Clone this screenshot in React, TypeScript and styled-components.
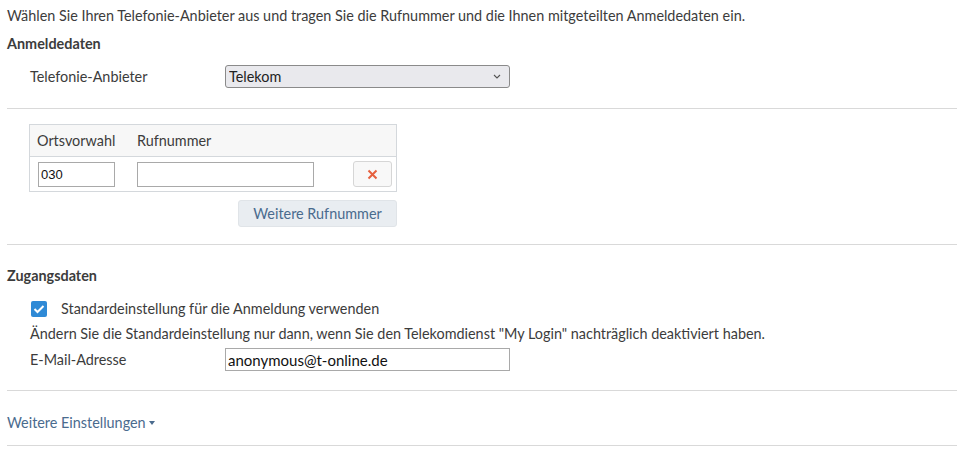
import { createGlobalStyle } from 'styled-components';
import styled from 'styled-components';

const GlobalStyle = createGlobalStyle`
  html, body {
    margin: 0;
    padding: 0;
    background: #fff;
  }
  body {
    font-family: Lato, "Open Sans", sans-serif;
    font-size: 14.4px;
    color: #3c3c3c;
  }
`;

const Page = styled.div`
  padding: 6px 0 0 7px;
`;

const Intro = styled.p`
  margin: 0 0 8px;
  line-height: 20px;
`;

const SectionTitle = styled.h3`
  margin: 0;
  font-size: 14.4px;
  font-weight: bold;
  line-height: 20px;
`;

const FieldRow = styled.div<{ $top?: number }>`
  display: flex;
  align-items: center;
  padding-left: 23px;
  margin-top: ${(p) => p.$top ?? 0}px;
`;

const Label = styled.label`
  width: 195px;
  line-height: 20px;
`;

const chevron =
  "url(\"data:image/svg+xml,%3Csvg xmlns='http://www.w3.org/2000/svg' width='8' height='5' viewBox='0 0 8 5'%3E%3Cpath d='M1 1l3 3 3-3' fill='none' stroke='%23555' stroke-width='1.1'/%3E%3C/svg%3E\")";

const Select = styled.select`
  appearance: none;
  width: 285px;
  height: 23px;
  padding: 0 3px;
  border: 1px solid #8a8a8a;
  border-radius: 3px;
  background: #e9e9ed ${chevron} no-repeat right 8px center;
  color: #222;
  font-family: inherit;
  font-size: 14.4px;
`;

const Divider = styled.hr<{ $top: number; $bottom: number }>`
  border: 0;
  border-top: 1px solid #d9d9d9;
  margin: ${(p) => p.$top}px 0 ${(p) => p.$bottom}px;
`;

const NumberTable = styled.div`
  margin-left: 22px;
  width: 366px;
  border: 1px solid #d4d8dc;
`;

const HeadRow = styled.div`
  display: flex;
  align-items: center;
  height: 31px;
  background: #f7f7f7;
  border-bottom: 1px solid #d4d8dc;
  padding-left: 7px;
`;

const HeadCell = styled.span<{ $w: number }>`
  width: ${(p) => p.$w}px;
`;

const BodyRow = styled.div`
  display: flex;
  align-items: center;
  height: 34px;
  padding-left: 8px;
`;

const TextInput = styled.input<{ $w: number; $big?: boolean; $gap?: number }>`
  box-sizing: border-box;
  width: ${(p) => p.$w}px;
  height: ${(p) => (p.$big ? 23 : 25)}px;
  margin-left: ${(p) => p.$gap ?? 0}px;
  border: 1px solid #a9a9a9;
  padding: 0 2px;
  color: #111;
  font-family: ${(p) => (p.$big ? 'inherit' : '"Liberation Sans", Arial, sans-serif')};
  font-size: ${(p) => (p.$big ? 15 : 13)}px;
  outline: none;
`;

const DeleteButton = styled.button`
  box-sizing: border-box;
  width: 39px;
  height: 26px;
  margin-left: 39px;
  border: 1px solid #d6d6d6;
  border-radius: 3px;
  background: #f8f8f8;
  display: flex;
  align-items: center;
  justify-content: center;
  padding: 0;
`;

const AddRow = styled.div`
  width: 390px;
  display: flex;
  justify-content: flex-end;
  margin-top: 8px;
`;

const AddButton = styled.button`
  width: 159px;
  height: 27px;
  border: 1px solid #e0e4e8;
  border-radius: 3px;
  background: #e9edf1;
  color: #4a6b8e;
  font-family: inherit;
  font-size: 14.4px;
  padding: 0;
`;

const CheckRow = styled.div`
  display: flex;
  align-items: center;
  gap: 14px;
  padding-left: 24px;
  margin-top: 13px;
  line-height: 20px;
`;

const CheckBox = styled.span`
  width: 16px;
  height: 16px;
  border-radius: 2px;
  background: #2f8ad6;
  display: flex;
  align-items: center;
  justify-content: center;
`;

const Hint = styled.p`
  margin: 5px 0 0;
  padding-left: 23px;
  line-height: 20px;
`;

const MoreLink = styled.a`
  display: inline-flex;
  align-items: center;
  gap: 3px;
  color: #4a6b8e;
  text-decoration: none;
  line-height: 20px;
`;

const Caret = styled.span`
  width: 0;
  height: 0;
  border-left: 3px solid transparent;
  border-right: 3px solid transparent;
  border-top: 4px solid #4a6b8e;
`;

export default function App() {
  return (
    <Page>
      <GlobalStyle />
      <Intro>
        Wählen Sie Ihren Telefonie-Anbieter aus und tragen Sie die Rufnummer und die Ihnen mitgeteilten
        Anmeldedaten ein.
      </Intro>
      <SectionTitle>Anmeldedaten</SectionTitle>
      <FieldRow $top={11}>
        <Label>Telefonie-Anbieter</Label>
        <Select defaultValue="Telekom">
          <option>Telekom</option>
        </Select>
      </FieldRow>
      <Divider $top={20} $bottom={15} />
      <NumberTable>
        <HeadRow>
          <HeadCell $w={100}>Ortsvorwahl</HeadCell>
          <HeadCell $w={100}>Rufnummer</HeadCell>
        </HeadRow>
        <BodyRow>
          <TextInput $w={77} defaultValue="030" />
          <TextInput $w={177} $gap={22} defaultValue="" />
          <DeleteButton aria-label="Löschen">
            <svg width="11" height="11" viewBox="0 0 11 11">
              <path d="M1.5 1.5 L9.5 9.5 M9.5 1.5 L1.5 9.5" stroke="#e6603e" strokeWidth="2" />
            </svg>
          </DeleteButton>
        </BodyRow>
      </NumberTable>
      <AddRow>
        <AddButton>Weitere Rufnummer</AddButton>
      </AddRow>
      <Divider $top={17} $bottom={21} />
      <SectionTitle>Zugangsdaten</SectionTitle>
      <CheckRow>
        <CheckBox>
          <svg width="12" height="10" viewBox="0 0 12 10">
            <path d="M1.5 5 L4.5 8 L10.5 2" fill="none" stroke="#fff" strokeWidth="2" />
          </svg>
        </CheckBox>
        Standardeinstellung für die Anmeldung verwenden
      </CheckRow>
      <Hint>
        Ändern Sie die Standardeinstellung nur dann, wenn Sie den Telekomdienst "My Login" nachträglich
        deaktiviert haben.
      </Hint>
      <FieldRow $top={4}>
        <Label>E-Mail-Adresse</Label>
        <TextInput $w={285} $big defaultValue="anonymous@t-online.de" />
      </FieldRow>
      <Divider $top={19} $bottom={22} />
      <MoreLink href="#">
        Weitere Einstellungen
        <Caret />
      </MoreLink>
      <Divider $top={12} $bottom={0} />
    </Page>
  );
}
